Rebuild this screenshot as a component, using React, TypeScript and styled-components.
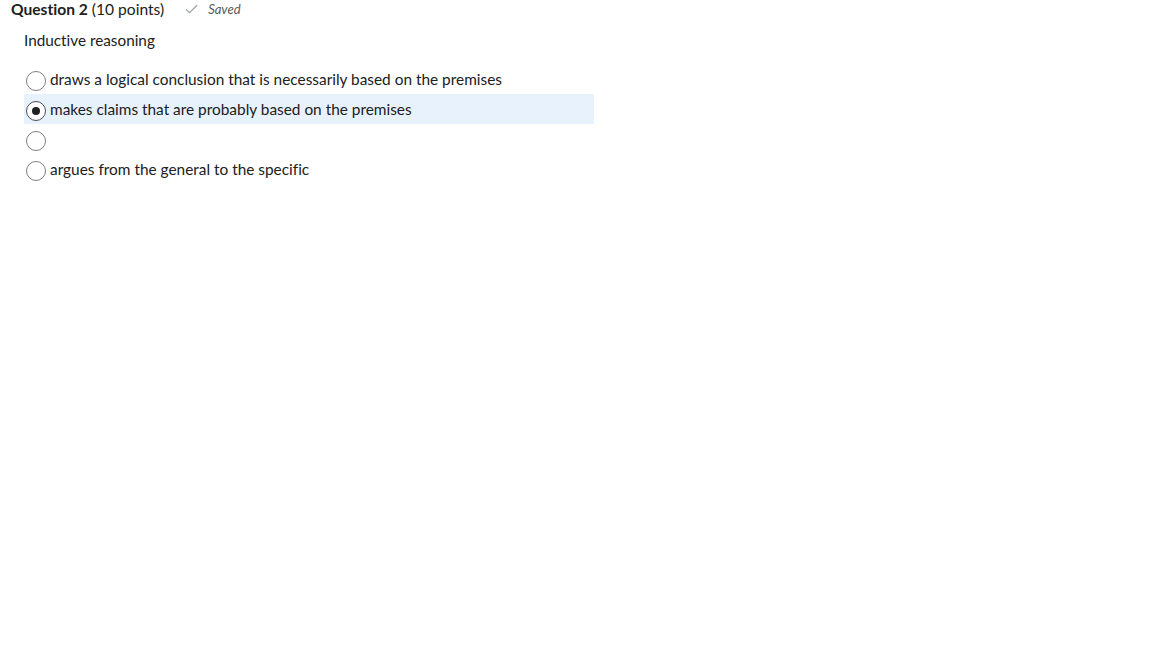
import React, { ReactElement } from "react";
import styled, { createGlobalStyle } from "styled-components";

const GlobalStyle = createGlobalStyle`
  body {
    margin: 0;
    background: #ffffff;
    font-family: Lato, "Open Sans", sans-serif;
    color: #202122;
    font-variant-ligatures: none;
  }
`;

interface Choice {
  id: string;
  text: string;
}

const choices: Choice[] = [
  { id: "a", text: "draws a logical conclusion that is necessarily based on the premises" },
  { id: "b", text: "makes claims that are probably based on the premises" },
  { id: "c", text: "" },
  { id: "d", text: "argues from the general to the specific" },
];

const selectedId = "b";

function App(): ReactElement {
  return (
    <>
      <GlobalStyle />
      <Page>
        <Header>
          <Title>
            <strong>Question 2</strong> (10 points)
          </Title>
          <SavedTag>
            <svg width="13" height="10" viewBox="0 0 13 10">
              <path d="M1 5.2 L4.6 8.6 L12 1.2" fill="none" stroke="#a0a4a8" strokeWidth="1.3" />
            </svg>
            <span>Saved</span>
          </SavedTag>
        </Header>
        <Prompt>Inductive reasoning</Prompt>
        <Choices>
          {choices.map((c) => (
            <ChoiceRow key={c.id} $selected={c.id === selectedId}>
              <Radio $checked={c.id === selectedId} />
              <ChoiceText>{c.text}</ChoiceText>
            </ChoiceRow>
          ))}
        </Choices>
      </Page>
    </>
  );
}

export default App;

const Page = styled.div`
  padding: 0 0 0 11px;
`;

const Header = styled.div`
  display: flex;
  align-items: center;
  height: 18px;
  gap: 21px;
`;

const Title = styled.div`
  font-size: 15.6px;
  color: #202122;
  strong {
    font-weight: 700;
  }
`;

const SavedTag = styled.div`
  display: flex;
  align-items: center;
  gap: 10px;
  font-size: 13px;
  font-style: italic;
  color: #565a5c;
`;

const Prompt = styled.div`
  margin: 12px 0 0 13px;
  font-size: 15.3px;
  line-height: 20px;
  color: #202122;
`;

const Choices = styled.div`
  margin: 14px 0 0 13px;
  width: 570px;
  display: flex;
  flex-direction: column;
`;

const ChoiceRow = styled.label<{ $selected: boolean }>`
  display: flex;
  align-items: center;
  height: 30px;
  padding-left: 2px;
  gap: 4px;
  background: ${(p) => (p.$selected ? "#e8f2fd" : "transparent")};
`;

const Radio = styled.span<{ $checked: boolean }>`
  position: relative;
  box-sizing: border-box;
  width: 20px;
  height: 20px;
  margin-top: 3px;
  border-radius: 50%;
  border: ${(p) => (p.$checked ? "1.5px solid #494c4e" : "1px solid #7c8085")};
  background: #ffffff;
  flex-shrink: 0;
  &::after {
    content: "";
    display: ${(p) => (p.$checked ? "block" : "none")};
    position: absolute;
    left: 50%;
    top: 50%;
    width: 8px;
    height: 8px;
    margin: -4px 0 0 -4px;
    border-radius: 50%;
    background: #202122;
  }
`;

const ChoiceText = styled.span`
  font-size: 15.4px;
  color: #202122;
`;
